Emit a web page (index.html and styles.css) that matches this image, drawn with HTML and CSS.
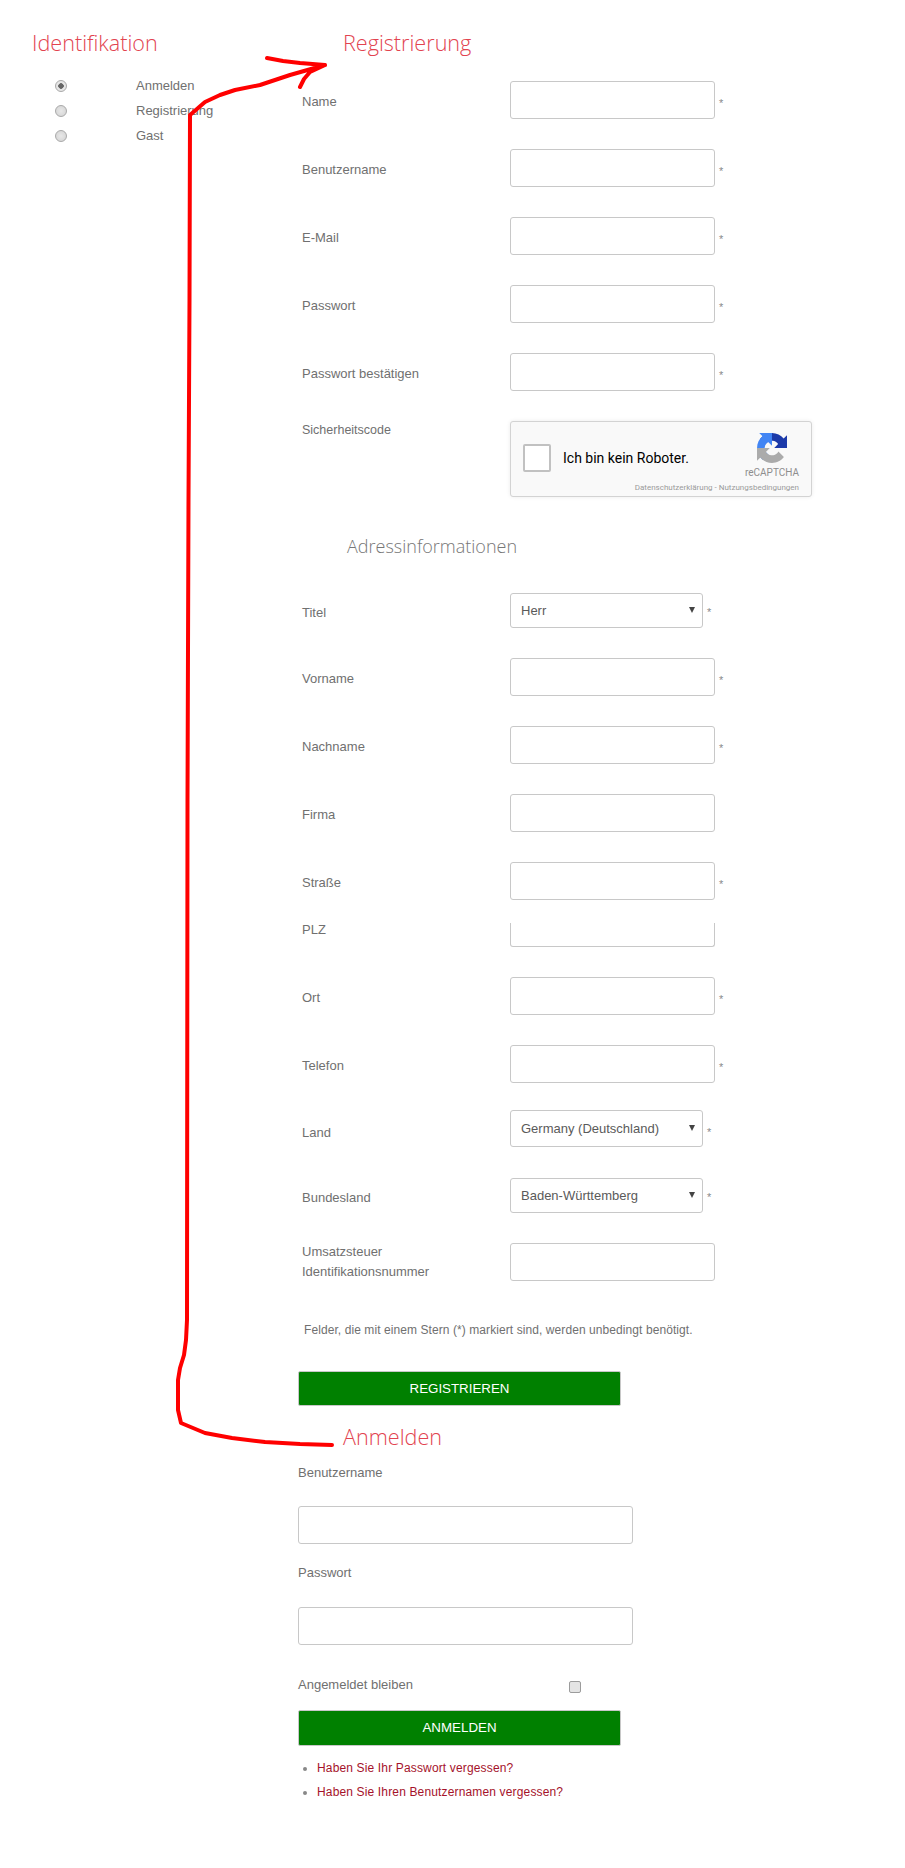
FILE: index.html
```html
<!DOCTYPE html>
<html lang="de">
<head>
<meta charset="utf-8">
<title>Registrierung</title>
<link rel="stylesheet" href="styles.css">
</head>
<body>
<div class="page">
  <aside class="side">
    <h2 class="title">Identifikation</h2>
    <ul class="choices">
      <li><input type="radio" name="mode" class="radio" checked><label>Anmelden</label></li>
      <li><input type="radio" name="mode" class="radio"><label>Registrierung</label></li>
      <li><input type="radio" name="mode" class="radio"><label>Gast</label></li>
    </ul>
  </aside>
  <main class="main">
    <h2 class="title indent">Registrierung</h2>
    <form class="form">
      <div class="row"><label>Name</label><input class="field" type="text"><span class="star">*</span></div>
      <div class="row"><label>Benutzername</label><input class="field" type="text"><span class="star">*</span></div>
      <div class="row"><label>E-Mail</label><input class="field" type="text"><span class="star">*</span></div>
      <div class="row"><label>Passwort</label><input class="field" type="text"><span class="star">*</span></div>
      <div class="row"><label>Passwort bestätigen</label><input class="field" type="text"><span class="star">*</span></div>
      <div class="row captcha-row"><label>Sicherheitscode</label>
        <div class="captcha">
          <span class="captcha-box"></span>
          <span class="captcha-text">Ich bin kein Roboter.</span>
          <div class="captcha-brand">
            <svg class="captcha-logo" viewBox="0 0 64 64" aria-hidden="true">
              <path fill="#1c3aa9" d="M64 31.955l-.033-1.37V4.687l-7.16 7.16C50.948 4.674 42.033.093 32.05.093c-10.4 0-19.622 4.96-25.458 12.64l11.737 11.86a15.55 15.55 0 0 1 4.744-5.327c2.05-1.6 4.953-2.91 8.977-2.91.486 0 .86.057 1.136.163 4.986.393 9.307 3.16 11.858 7.17l-8.3 8.3c10.513-.04 22.4-.066 27.248.1"/>
              <path fill="#4285f4" d="M31.95.001l-1.37.033H4.687l7.16 7.16C4.674 13.052.093 21.967.093 31.95c0 10.4 4.96 19.622 12.64 25.458l11.86-11.737a15.55 15.55 0 0 1-5.327-4.744c-1.6-2.05-2.91-4.953-2.91-8.977 0-.486.057-.86.163-1.136.393-4.986 3.16-9.307 7.17-11.858l8.3 8.3c-.04-10.513-.066-22.4.1-27.248"/>
              <path fill="#ababab" d="M.001 32.045l.033 1.37v25.898l7.16-7.16c5.858 7.173 14.773 11.754 24.756 11.754 10.4 0 19.622-4.96 25.458-12.64L45.67 39.407a15.55 15.55 0 0 1-4.744 5.327c-2.05 1.6-4.953 2.91-8.977 2.91-.486 0-.86-.057-1.136-.163-4.986-.393-9.307-3.16-11.858-7.17l8.3-8.3c-10.513.04-22.4.066-27.248-.1"/>
            </svg>
            <span class="captcha-name">reCAPTCHA</span>
          </div>
          <span class="captcha-legal">Datenschutzerklärung - Nutzungsbedingungen</span>
        </div>
      </div>
      <h3 class="subtitle">Adressinformationen</h3>
      <div class="row h65"><label>Titel</label><div class="select">Herr<span class="caret"></span></div><span class="star">*</span></div>
      <div class="row"><label>Vorname</label><input class="field" type="text"><span class="star">*</span></div>
      <div class="row"><label>Nachname</label><input class="field" type="text"><span class="star">*</span></div>
      <div class="row"><label>Firma</label><input class="field" type="text"></div>
      <div class="row h61"><label>Straße</label><input class="field" type="text"><span class="star">*</span></div>
      <div class="row h54 plz"><label>PLZ</label><input class="field clipped" type="text"></div>
      <div class="row"><label>Ort</label><input class="field" type="text"><span class="star">*</span></div>
      <div class="row h65"><label>Telefon</label><input class="field" type="text"><span class="star">*</span></div>
      <div class="row land"><label>Land</label><div class="select">Germany (Deutschland)<span class="caret"></span></div><span class="star">*</span></div>
      <div class="row h65"><label>Bundesland</label><div class="select">Baden-Württemberg<span class="caret"></span></div><span class="star">*</span></div>
      <div class="row"><label class="multi">Umsatzsteuer Identifikationsnummer</label><input class="field" type="text"></div>
      <p class="note">Felder, die mit einem Stern (*) markiert sind, werden unbedingt benötigt.</p>
      <button class="btn" type="button">REGISTRIEREN</button>
    </form>
    <h2 class="title indent login-title">Anmelden</h2>
    <form class="login">
      <label class="login-label">Benutzername</label>
      <input class="field wide" type="text">
      <label class="login-label second">Passwort</label>
      <input class="field wide" type="text">
      <div class="remember"><label>Angemeldet bleiben</label><input class="check" type="checkbox"></div>
      <button class="btn" type="button">ANMELDEN</button>
    </form>
    <ul class="links">
      <li><a href="#">Haben Sie Ihr Passwort vergessen?</a></li>
      <li><a href="#">Haben Sie Ihren Benutzernamen vergessen?</a></li>
    </ul>
  </main>
  <svg class="scribble" viewBox="0 0 905 1868" aria-hidden="true">
    <path d="M267 58 L283 61 L300 63 L325 65 M300 87 L304 79 L310 72 L325 65 M325 65 L290 75 L260 85 L235 90 L220 95 L205 102 L190 115 L189.5 300 L188.5 500 L187.5 800 L187 1320 L186 1340 L184 1355 L180 1368 L178 1380 L178 1410 L181 1423 L205 1433 L232 1438 L265 1442 L300 1444 L332 1445"/>
  </svg>
</div>
</body>
</html>
```
FILE: styles.css
```css
* { box-sizing: border-box; }
body { margin: 0; background: #fff; color: #707070; font: 13px/18px "Liberation Sans", Arial, sans-serif; }
.page { position: relative; display: flex; height: 1868px; padding-top: 28px; overflow: hidden; }
.side { width: 298px; padding-left: 32px; flex: none; }
.main { width: 607px; flex: none; }
.title { margin: 0; font: 300 21.6px/30px "Open Sans", sans-serif; color: #e2434f; }
.indent { padding-left: 45px; }
.choices { list-style: none; margin: 15px 0 0; padding: 0; }
.choices li { display: flex; align-items: center; height: 25px; }
.radio { appearance: none; width: 12px; height: 12px; margin: 0 69px 0 23px; border: 1px solid #a9a9a9; border-radius: 50%; background: radial-gradient(circle, #e8e8e8, #d2d2d2); }
.radio:checked { background: radial-gradient(circle, #666 0 2.5px, #e6e6e6 3px); }
.form { margin-top: 23px; padding-left: 4px; }
.row { display: flex; align-items: flex-start; height: 68px; }
.row label { display: flex; align-items: center; width: 208px; height: 42px; flex: none; }
.row.h65 { height: 65px; }
.row.h61 { height: 61px; }
.row.h54 { height: 54px; }
.field { display: block; width: 205px; height: 38px; margin: 0; padding: 0 8px; background: #fff; border: 1px solid #c8c8c8; border-radius: 3px; }
.clipped { height: 24px; border-top: 0; border-radius: 0 0 3px 3px; }
.row.plz label { height: 14px; }
.star { margin: 13px 0 0 4px; font-size: 11px; color: #8a8a8a; }
.row label.multi { height: 38px; line-height: 20px; }
.select { position: relative; width: 193px; height: 35px; padding-left: 10px; line-height: 33px; color: #5a5a5a; background: #fff; border: 1px solid #c8c8c8; border-radius: 3px; }
.row:has(.select) label { height: 40px; }
.select + .star { margin-top: 10px; }
.row.land label { height: 46px; }
.land .select { height: 37px; line-height: 35px; }
.land .caret { top: 14px; }
.land .select + .star { margin-top: 13px; }
.caret { position: absolute; top: 13px; right: 7px; border-left: 3px solid transparent; border-right: 3px solid transparent; border-top: 6px solid #444; }
.captcha-row { height: 112px; }
.row.captcha-row label { height: 18px; font-size: 12.5px; }
.captcha { position: relative; display: flex; align-items: center; width: 302px; height: 76px; background: #f9f9f9; border: 1px solid #d3d3d3; border-radius: 3px; box-shadow: 0 0 4px rgba(0,0,0,.08); }
.captcha-box { width: 28px; height: 28px; margin: -2px 12px 0 12px; background: #fff; border: 2px solid #c1c1c1; border-radius: 2px; flex: none; }
.captcha-text { margin-top: -2px; font: 14px Roboto, sans-serif; color: #000; }
.captcha-brand { position: absolute; top: 11px; right: 12px; display: flex; flex-direction: column; align-items: center; }
.captcha-logo { width: 30px; height: 30px; }
.captcha-name { margin-top: 4px; font: 10px/12px Roboto, sans-serif; color: #8e8e8e; }
.captcha-legal { position: absolute; right: 12px; bottom: 3px; font: 8px/10px Roboto, sans-serif; color: #9b9b9b; white-space: nowrap; }
.subtitle { height: 26px; margin: 0 0 34px 45px; font: 300 18px/26px "Open Sans", sans-serif; color: #777; }
.note { height: 60px; margin: 0; padding: 10px 0 0 2px; font-size: 12px; line-height: 18px; letter-spacing: .08px; }
.btn { display: block; width: 323px; height: 35px; padding: 0; background: #008000; border: 1px solid #c8c8c8; border-radius: 2px; color: #fff; font: 13.33px "Liberation Sans", Arial, sans-serif; text-transform: uppercase; }
.form .btn { margin-left: -4px; }
.login-title { margin-top: 16px; }
.login { display: flex; flex-direction: column; align-items: flex-start; }
.login-label { margin-top: 12px; margin-bottom: 24px; }
.login-label.second { margin-top: 20px; margin-bottom: 25px; }
.wide { width: 335px; }
.remember { display: flex; align-items: center; width: 100%; height: 18px; margin-top: 31px; margin-bottom: 16px; }
.remember label { width: 271px; }
.check { appearance: none; width: 12px; height: 12px; margin: 4px 0 0; background: #e4e4e4; border: 1px solid #9c9c9c; border-radius: 2px; }
.login .btn { height: 36px; padding-bottom: 2px; }
.links { margin: 13px 0 0; padding: 0 0 0 19px; font-size: 12px; letter-spacing: .15px; }
.links li { height: 24px; color: #888; }
.links a { color: #a5122a; text-decoration: none; }
.scribble { position: absolute; top: 0; left: 0; width: 905px; height: 1868px; fill: none; stroke: #f00; stroke-width: 4px; stroke-linecap: round; stroke-linejoin: round; pointer-events: none; }
```
